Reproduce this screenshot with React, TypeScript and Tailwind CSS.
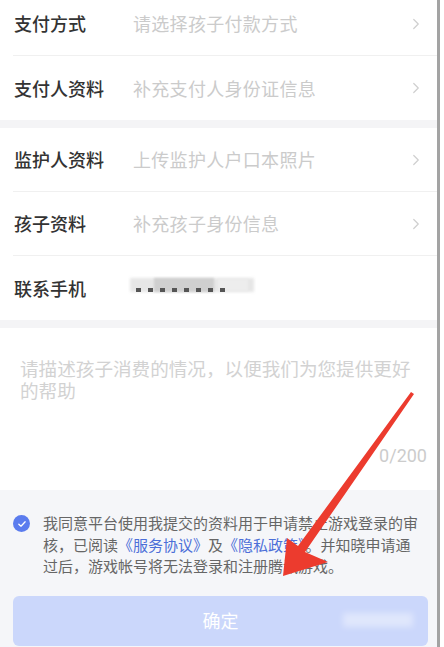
import { ChevronRight } from "lucide-react";

const font = { fontFamily: '"Noto Sans CJK SC", "Noto Sans", sans-serif' };

const Row = ({ label, value, last, chevron = true, children }: { label: string; value?: string; last?: boolean; chevron?: boolean; children?: React.ReactNode }) => (
  <div className="pl-[13px]">
    <div className={`h-16 flex items-center pr-[12px] ${last ? "" : "border-b border-[#f0f0f0]"}`}>
      <span className="w-[120px] pl-[1px] text-[18px] font-medium text-[#333]">{label}</span>
      <div className="flex-1 text-[18px] text-[#cbcbcb] tracking-[0.3px]">{value}{children}</div>
      {chevron && <ChevronRight className="w-[18px] h-[18px] text-[#cfcfcf]" strokeWidth={1.6} />}
    </div>
  </div>
);

const BlurredPhone = () => (
  <div className="relative w-[124px] h-[16px] -ml-[3px] mt-[-4px]">
    <div className="absolute left-0 top-0 w-[124px] h-[14px] bg-[#e6e6e6] blur-[1.5px]" />
    <div className="absolute left-[24px] top-0 w-[60px] h-[14px] bg-[#cfcfcf] blur-[1px]" />
    <div className="absolute left-[88px] top-[1px] w-[30px] h-[12px] bg-[#ededed] blur-[1px]" />
    <div className="absolute left-[6px] top-[10px] flex gap-[7px]">
      {[0, 1, 2, 3, 4, 5, 6, 7].map((i) => (
        <span key={i} className="w-[5px] h-[4px] bg-[#555] blur-[0.6px]" />
      ))}
    </div>
  </div>
);

export default function App() {
  return (
    <div className="w-[444px] h-[647px] overflow-hidden bg-white flex" style={font}>
      <div className="w-[437px] relative flex flex-col bg-[#f5f6f8]">
        <div className="-mt-2 bg-white">
          <Row label="支付方式" value="请选择孩子付款方式" />
          <Row label="支付人资料" value="补充支付人身份证信息" last />
        </div>
        <div className="h-2 bg-[#f4f4f6]" />
        <div className="bg-white">
          <Row label="监护人资料" value="上传监护人户口本照片" />
          <Row label="孩子资料" value="补充孩子身份信息" />
          <Row label="联系手机" chevron={false} last>
            <BlurredPhone />
          </Row>
        </div>
        <div className="h-2 bg-[#f4f4f6]" />
        <div className="bg-white h-[162px] flex flex-col pl-[20px] pr-[10px] pt-[29px]">
          <p className="text-[18.6px] leading-[22px] text-[#d2d2d2]">请描述孩子消费的情况，以便我们为您提供更好的帮助</p>
          <div className="mt-auto mb-[21px] text-right text-[18px] text-[#cccccc]" style={{ fontFamily: '"Roboto", sans-serif' }}>0/200</div>
        </div>
        <div className="flex-1 bg-[#f5f6f9] flex flex-col pt-[22px] px-[13px]">
          <div className="flex gap-[13px] pr-[5px]">
            <div className="w-[17px] h-[17px] shrink-0 mt-[3px] rounded-full bg-[#5b7cee] flex items-center justify-center">
              <svg viewBox="0 0 12 12" className="w-[10px] h-[10px]">
                <path d="M2.2 6.2 L4.8 8.6 L9.8 3.4" fill="none" stroke="white" strokeWidth="1.6" strokeLinecap="round" strokeLinejoin="round" />
              </svg>
            </div>
            <p className="text-[15px] leading-[21.5px] text-[#666]">
              我同意平台使用我提交的资料用于申请禁止游戏登录的审核，已阅读<span className="text-[#4c6fd8]">《服务协议》</span>及<span className="text-[#4c6fd8]">《隐私政策》</span>。并知晓申请通过后，游戏帐号将无法登录和注册腾讯游戏。
            </p>
          </div>
          <button className="mt-[19px] h-[50px] w-[415px] rounded-[6px] bg-[#cbd7fb] text-white text-[18px] flex items-center justify-center relative">
            确定
            <span className="absolute left-[330px] top-[17px] w-[70px] h-[14px] bg-white/40 blur-[3px]" />
          </button>
        </div>
        <svg className="absolute left-0 top-0 w-[437px] h-[647px] pointer-events-none" viewBox="0 0 437 647">
          <polygon
            points="283,576 287,538 298,546 411,392 414,394 305,552 328,562"
            fill="#ec3b2e"
          />
        </svg>
      </div>
      <div className="w-[3px] bg-[#a3a3a3]" />
      <div className="flex-1 bg-white" />
    </div>
  );
}
